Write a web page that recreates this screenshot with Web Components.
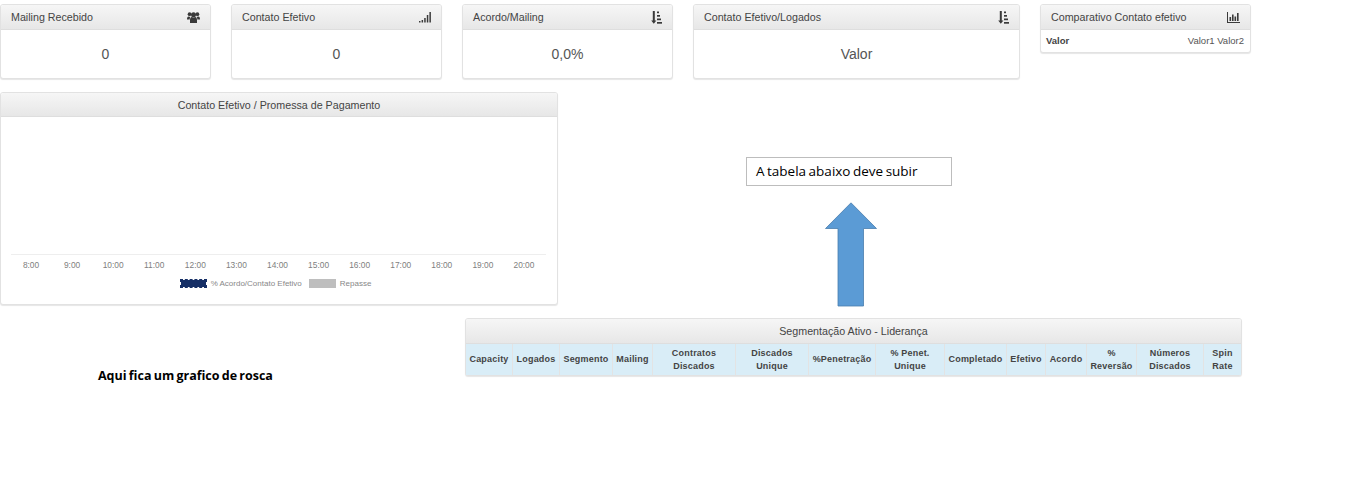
<!DOCTYPE html>
<html lang="pt">
<head>
<meta charset="utf-8">
<title>Painel</title>
<style>
  html, body { margin: 0; background: #fff; }
  body { width: 1363px; height: 491px; overflow: hidden; position: relative; font: 12px "Liberation Sans", Arial, sans-serif; color: #333; }
</style>
</head>
<body>
<dash-board>
  <stat-card style="width:211px" label="Mailing Recebido" value="0" icon="users"></stat-card>
  <stat-card style="width:211px" label="Contato Efetivo" value="0" icon="signal"></stat-card>
  <stat-card style="width:211px" label="Acordo/Mailing" value="0,0%" icon="sort"></stat-card>
  <stat-card style="width:327px" label="Contato Efetivo/Logados" value="Valor" icon="sort"></stat-card>
  <compare-card></compare-card>
  <line-chart slot="chart"></line-chart>
  <segment-table slot="table"></segment-table>
</dash-board>
<note-overlay></note-overlay>

<script>
const ICONS = {
  users: '<svg width="13" height="11" viewBox="0 0 13 11"><circle cx="2.6" cy="2.2" r="1.9"/><circle cx="10.4" cy="2.2" r="1.9"/><circle cx="6.5" cy="2.8" r="2.5"/><path d="M0 7.6C0 5.2.6 4.4 1.600 4.400c.5 0 1 .4 1.700.4-.4.7-.6 1.600-.6 2.800H0zM13 7.600c0-2.400-.6-3.200-1.600-3.200-.5 0-1 .4-1.700.4.4.7.6 1.600.6 2.800H13z"/><path d="M3 11V8c0-1.900.8-2.900 1.800-2.900.4 0 .9.5 1.700.5s1.300-.5 1.700-.5C9.200 5.100 10 6.100 10 8v3z"/></svg>',
  signal: '<svg width="12" height="11" viewBox="0 0 12 11"><rect x="0" y="9" width="1.5" height="1.5"/><rect x="2.6" y="8" width="1.5" height="2.5"/><rect x="5.2" y="6" width="1.5" height="4.5"/><rect x="7.8" y="3" width="1.5" height="7.5"/><rect x="10.4" y="0" width="1.5" height="10.5"/></svg>',
  sort: '<svg width="11" height="13" viewBox="0 0 11 13"><path d="M1.800 0h2v9.500H5.400L2.800 12.800.2 9.500h1.600z"/><rect x="6" y="0.500" width="2" height="1.700"/><rect x="6" y="4" width="3" height="1.700"/><rect x="6" y="7.500" width="4" height="1.700"/><rect x="6" y="11" width="5" height="1.700"/></svg>',
  bars: '<svg width="13" height="11" viewBox="0 0 13 11"><rect x="0" y="0" width="1" height="11"/><rect x="0" y="10" width="13" height="1"/><rect x="2.5" y="5" width="1.6" height="4"/><rect x="5" y="2.5" width="1.6" height="6.5"/><rect x="7.5" y="4.5" width="1.6" height="4.5"/><rect x="10" y="1" width="1.6" height="8"/></svg>'
};

const panelStyles = `
  :host { display: block; box-sizing: border-box; background: #fff; border: 1px solid #e2e2e2; border-radius: 3px;
    box-shadow: 0 1px 1px rgba(0,0,0,.1); }
  .head { box-sizing: border-box; display: flex; align-items: center; justify-content: space-between;
    background: linear-gradient(#f6f6f6, #e7e7e7); border-bottom: 1px solid #dedede; border-radius: 2px 2px 0 0;
    color: #444; font-size: 10.7px; }
  svg { display: block; fill: #3a3a3a; }
`;

class DashBoard extends HTMLElement {
  constructor() {
    super();
    this.attachShadow({ mode: 'open' });
    this.shadowRoot.innerHTML = `
      <style>
        :host { display: block; padding-top: 4px; }
        .cards { display: flex; align-items: flex-start; gap: 20px; }
        .chart { margin-top: 13px; width: 558px; }
        .table { margin: 13px 0 0 465px; width: 777px; }
      </style>
      <div class="cards"><slot></slot></div>
      <div class="chart"><slot name="chart"></slot></div>
      <div class="table"><slot name="table"></slot></div>`;
  }
}

class StatCard extends HTMLElement {
  constructor() {
    super();
    this.attachShadow({ mode: 'open' });
  }

  connectedCallback() {
    const value = this.getAttribute('value');
    this.shadowRoot.innerHTML = `
      <style>
        ${panelStyles}
        :host { height: 75px; flex: none; }
        .head { height: 25px; padding: 0 10px; }
        .value { height: 48px; display: flex; align-items: center; justify-content: center;
          font-size: 14px; color: #555; }
      </style>
      <div class="head"><span>${this.getAttribute('label')}</span>${ICONS[this.getAttribute('icon')]}</div>
      <div class="value">${value}</div>`;
  }
}

class CompareCard extends HTMLElement {
  constructor() {
    super();
    this.attachShadow({ mode: 'open' });
    this.shadowRoot.innerHTML = `
      <style>
        ${panelStyles}
        :host { width: 211px; height: 49px; flex: none; }
        .head { height: 25px; padding: 0 10px; }
        .row { box-sizing: border-box; height: 22px; display: flex; align-items: center; justify-content: space-between;
          padding: 0 6px 2px 5px; font-size: 9.5px; color: #555; }
        b { color: #444; }
      </style>
      <div class="head"><span>Comparativo Contato efetivo</span>${ICONS.bars}</div>
      <div class="row"><b>Valor</b><span>Valor1 Valor2</span></div>`;
  }
}

class LineChart extends HTMLElement {
  constructor() {
    super();
    this.attachShadow({ mode: 'open' });
    const hours = [];
    for (let h = 8; h <= 20; h++) hours.push(`<span>${h}:00</span>`);
    this.shadowRoot.innerHTML = `
      <style>
        ${panelStyles}
        :host { height: 213px; }
        .head { height: 24px; justify-content: center; }
        .plot { height: 137px; margin: 0 11px 0 10px; border-bottom: 1px solid #eee; }
        .axis { display: grid; grid-template-columns: repeat(13, 1fr); margin: 0 12.5px 0 9.5px;
          height: 19px; align-items: center; font-size: 8.4px; color: #808080; text-align: center; }
        .legend { display: flex; justify-content: center; align-items: center; margin-top: 5px;
          font-size: 8px; color: #888; padding-right: 7px; }
        i { display: block; box-sizing: border-box; width: 27px; height: 9px; margin-right: 4px; }
        .navy { background: #162f66; background-clip: padding-box; border: 1px dashed #162f66; }
        .grey { background: #bebebe; margin-left: 7px; }
      </style>
      <div class="head">Contato Efetivo / Promessa de Pagamento</div>
      <div class="plot"></div>
      <div class="axis">${hours.join('')}</div>
      <div class="legend"><i class="navy"></i>% Acordo/Contato Efetivo<i class="grey"></i>Repasse</div>`;
  }
}

class SegmentTable extends HTMLElement {
  constructor() {
    super();
    this.attachShadow({ mode: 'open' });
    const cols = [
      ['Capacity', 46], ['Logados', 47], ['Segmento', 53], ['Mailing', 40], ['Contratos<br>Discados', 83],
      ['Discados<br>Unique', 73], ['%Penetração', 67], ['% Penet.<br>Unique', 69], ['Completado', 62],
      ['Efetivo', 39], ['Acordo', 41], ['%<br>Reversão', 50], ['Números<br>Discados', 67], ['Spin<br>Rate', 38]
    ];
    this.shadowRoot.innerHTML = `
      <style>
        ${panelStyles}
        :host { height: 58px; }
        .head { height: 25px; justify-content: center; }
        table { border-collapse: separate; border-spacing: 0; table-layout: fixed; width: 775px; }
        th { box-sizing: border-box; height: 31px; padding: 0; background: #d9edf7; border-left: 1px solid #e3e3e3;
          font-size: 9px; line-height: 13px; letter-spacing: .2px; color: #444; font-weight: bold; text-align: center; }
        th:first-child { border-left: 0; }
      </style>
      <div class="head">Segmentação Ativo - Liderança</div>
      <table><tr>${cols.map(([t, w]) => `<th style="width:${w}px">${t}</th>`).join('')}</tr></table>`;
  }
}

// anotacoes coladas por cima do painel
class NoteOverlay extends HTMLElement {
  constructor() {
    super();
    this.attachShadow({ mode: 'open' });
    this.shadowRoot.innerHTML = `
      <style>
        :host { display: block; font: 13.5px "Open Sans", "Liberation Sans", sans-serif; word-spacing: -1px; color: #000; }
        .box { position: absolute; left: 746px; top: 157px; width: 206px; height: 29px; box-sizing: border-box;
          border: 1px solid #bdbdbd; padding-left: 9px; line-height: 27px; background: #fff; }
        svg { position: absolute; left: 824px; top: 202px; }
        .donut { position: absolute; left: 98px; top: 367px; font-size: 12.5px; font-weight: bold; line-height: 18px; }
      </style>
      <div class="box">A tabela abaixo deve subir</div>
      <svg width="54" height="105" viewBox="0 0 54 105">
        <path d="M27 .8 52.5 26.5H39.5V104H14V26.5H1.500z" fill="#5b9bd5" stroke="#4a7ead" stroke-width=".8"/>
      </svg>
      <div class="donut">Aqui fica um grafico de rosca</div>`;
  }
}

customElements.define('dash-board', DashBoard);
customElements.define('stat-card', StatCard);
customElements.define('compare-card', CompareCard);
customElements.define('line-chart', LineChart);
customElements.define('segment-table', SegmentTable);
customElements.define('note-overlay', NoteOverlay);
</script>
</body>
</html>
